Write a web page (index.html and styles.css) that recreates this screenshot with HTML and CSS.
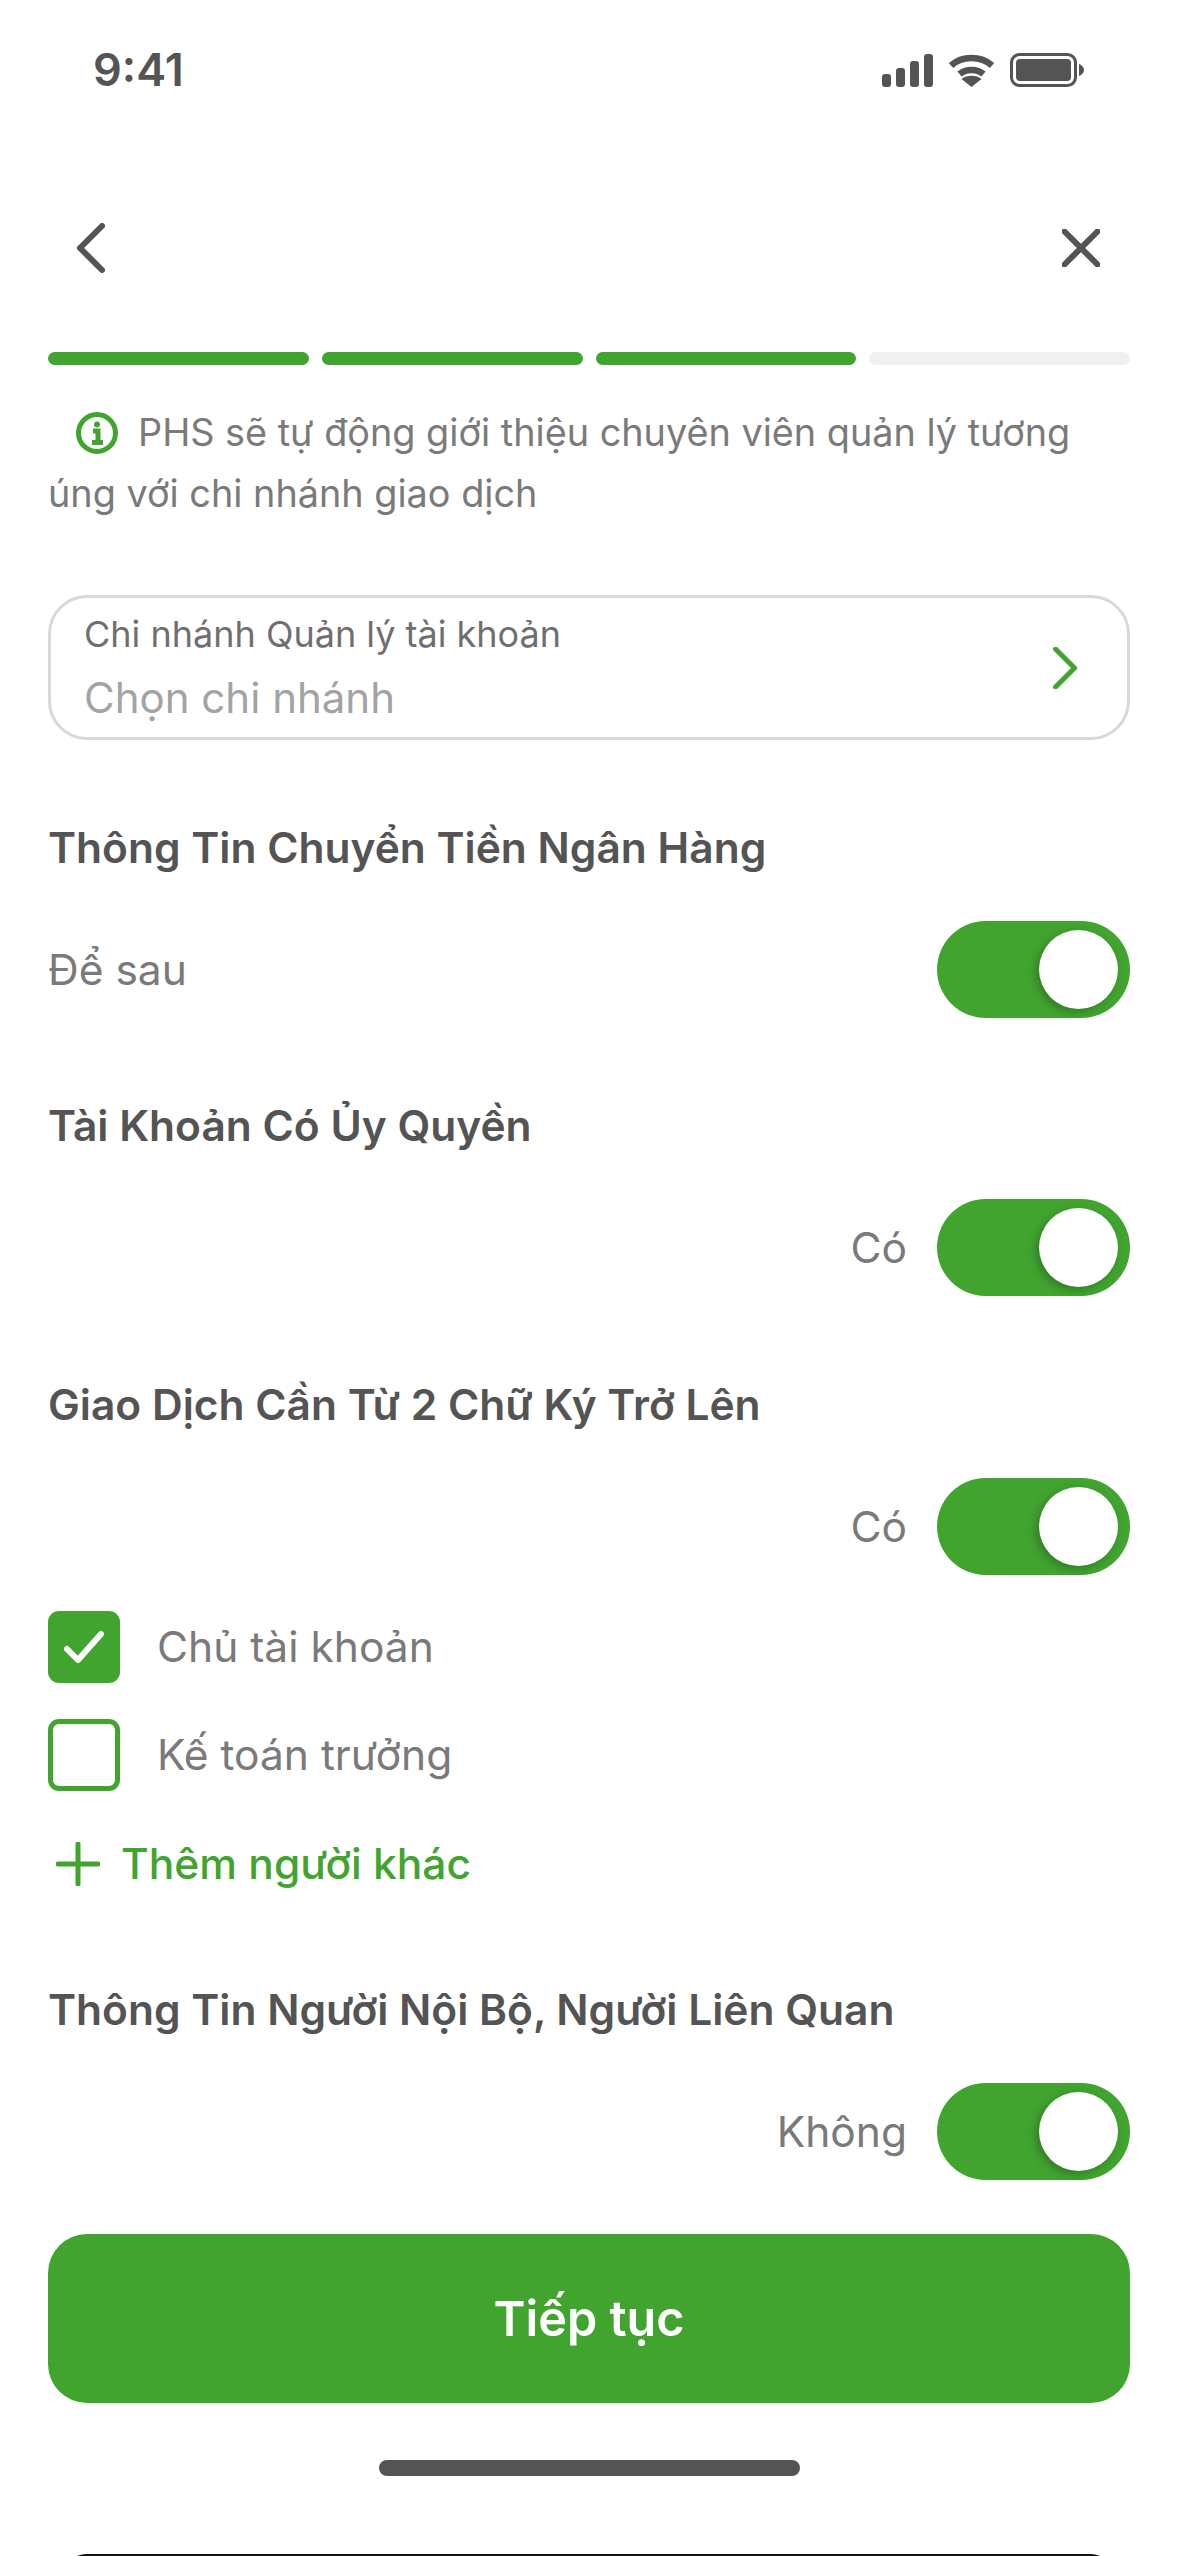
FILE: index.html
```html
<!DOCTYPE html>
<html lang="en">
<head>
    <meta charset="UTF-8">
    <meta name="viewport" content="width=device-width, initial-scale=1.0">
    <title>Mở tài khoản</title>
    <link rel="stylesheet" href="styles.css">
</head>
<body>

<div class="screen">
    <div class="status-bar">
        <span class="time">9:41</span>
        <div class="status-icons">
            <svg width="51" height="33" viewBox="0 0 51 33"><rect x="0" y="20" width="9" height="13" rx="3"/><rect x="14" y="14" width="9" height="19" rx="3"/><rect x="28" y="7" width="9" height="26" rx="3"/><rect x="42" y="0" width="9" height="33" rx="3"/></svg>
            <svg width="47" height="34" viewBox="0 0 47 34"><path class="wifi-arc" d="M3 12.5C14 2.5 33 2.5 44 12.5"/><path class="wifi-arc" d="M11.5 21C18 15.5 29 15.5 35.500 21"/><path d="M23.500 34L13.500 26C19 21.800 28 21.800 33.500 26Z"/></svg>
            <svg width="74" height="34" viewBox="0 0 74 34"><rect class="battery-shell" x="1.500" y="1.500" width="64" height="31" rx="8"/><rect x="6" y="6" width="55" height="22" rx="4"/><path d="M69 11C72 12 74 14.500 74 17C74 19.500 72 22 69 23Z"/></svg>
        </div>
    </div>

    <div class="nav-bar">
        <svg width="28" height="50" viewBox="0 0 28 50"><path class="nav-stroke" d="M25 3L3 25L25 47"/></svg>
        <svg width="38" height="38" viewBox="0 0 38 38"><path class="nav-stroke" d="M2.500 2.500L35.500 35.500M35.500 2.500L2.500 35.500"/></svg>
    </div>

    <div class="progress">
        <div class="step done"></div>
        <div class="step done"></div>
        <div class="step done"></div>
        <div class="step"></div>
    </div>

    <p class="info">
        <svg class="info-icon" width="42" height="42" viewBox="0 0 42 42"><circle class="info-ring" cx="21" cy="21" r="18.500"/><circle class="info-dot" cx="21" cy="12.500" r="3"/><path class="info-stem" d="M17 19H22V30M16 30.500H27"/></svg>PHS sẽ tự động giới thiệu chuyên viên quản lý tương úng với chi nhánh giao dịch
    </p>

    <div class="select-field">
        <div>
            <div class="field-label">Chi nhánh Quản lý tài khoản</div>
            <div class="field-value">Chọn chi nhánh</div>
        </div>
        <svg width="24" height="42" viewBox="0 0 24 42"><path class="chevron" d="M2.500 2L21.500 21L2.500 40"/></svg>
    </div>

    <h2 class="section-title first">Thông Tin Chuyển Tiền Ngân Hàng</h2>
    <div class="toggle-row spread">
        <span class="toggle-text">Để sau</span>
        <div class="toggle"><div class="knob"></div></div>
    </div>

    <h2 class="section-title">Tài Khoản Có Ủy Quyền</h2>
    <div class="toggle-row">
        <span class="toggle-text">Có</span>
        <div class="toggle"><div class="knob"></div></div>
    </div>

    <h2 class="section-title">Giao Dịch Cần Từ 2 Chữ Ký Trở Lên</h2>
    <div class="toggle-row">
        <span class="toggle-text">Có</span>
        <div class="toggle"><div class="knob"></div></div>
    </div>

    <div class="check-list">
        <div class="check-item">
            <div class="checkbox checked">
                <svg width="44" height="36" viewBox="0 0 44 36"><path d="M5 20L16 31L39 5"/></svg>
            </div>
            <span>Chủ tài khoản</span>
        </div>
        <div class="check-item">
            <div class="checkbox"></div>
            <span>Kế toán trưởng</span>
        </div>
    </div>

    <div class="add-row">
        <svg width="44" height="44" viewBox="0 0 44 44"><path d="M22 2V42M2 22H42"/></svg>
        <span>Thêm người khác</span>
    </div>

    <h2 class="section-title last">Thông Tin Người Nội Bộ, Người Liên Quan</h2>
    <div class="toggle-row">
        <span class="toggle-text">Không</span>
        <div class="toggle"><div class="knob"></div></div>
    </div>

    <button class="submit">Tiếp tục</button>

    <div class="home-indicator"></div>
    <div class="next-edge"></div>
</div>

</body>
</html>
```

FILE: styles.css
```css
* {
    box-sizing: border-box;
}

body {
    margin: 0;
    background-color: #fff;
    font-family: Inter, "Noto Sans", sans-serif;
    color: #545454;
}

.screen {
    position: relative;
    width: 1179px;
    height: 2556px;
    padding: 0 49px 0 48px;
    overflow: hidden;
}

.status-bar {
    display: flex;
    justify-content: space-between;
    align-items: center;
    height: 140px;
    padding: 0 46px 0 45px;
}

.time {
    font-size: 45px;
    font-weight: 600;
    line-height: 54px;
}

.status-icons {
    display: flex;
    align-items: center;
    gap: 15px;
}

.status-icons svg {
    fill: #545454;
}

.wifi-arc {
    fill: none;
    stroke: #545454;
    stroke-width: 6.500;
}

.battery-shell {
    fill: none;
    stroke: #545454;
    stroke-width: 3;
}

.nav-bar {
    display: flex;
    justify-content: space-between;
    align-items: center;
    height: 100px;
    margin-top: 58px;
    padding: 0 30px 0 29px;
}

.nav-stroke {
    fill: none;
    stroke: #545454;
    stroke-width: 6;
    stroke-linecap: round;
    stroke-linejoin: round;
}

.progress {
    display: flex;
    gap: 13px;
    margin-top: 54px;
}

.step {
    flex: 1;
    height: 13px;
    border-radius: 7px;
    background-color: #f0f0f0;
}

.step.done {
    background-color: #41a42f;
}

.info {
    margin: 37px 0 0;
    font-size: 37.800px;
    line-height: 61px;
    color: #7a7a7a;
    text-indent: 28px;
}

.info-icon {
    margin-right: 20px;
    vertical-align: -8px;
}

.info-ring {
    fill: none;
    stroke: #41a42f;
    stroke-width: 5;
}

.info-dot {
    fill: #41a42f;
}

.info-stem {
    fill: none;
    stroke: #41a42f;
    stroke-width: 5;
}

.select-field {
    display: flex;
    justify-content: space-between;
    align-items: center;
    height: 145px;
    margin-top: 71px;
    padding: 0 50px 0 33px;
    border: 3px solid #d8d8d8;
    border-radius: 39px;
}

.field-label {
    font-size: 36px;
    line-height: 40px;
    color: #6f6f6f;
}

.field-value {
    margin-top: 20px;
    font-size: 42px;
    line-height: 48px;
    color: #a3a3a3;
}

.chevron {
    fill: none;
    stroke: #41a42f;
    stroke-width: 5;
    stroke-linecap: round;
    stroke-linejoin: round;
}

.section-title {
    margin: 83.400px 0 48px;
    font-size: 42.500px;
    font-weight: 600;
    line-height: 50px;
    color: #545454;
}

.section-title.first {
    margin-top: 83px;
}

.section-title.last {
    margin-top: 96px;
}

.toggle-row {
    display: flex;
    justify-content: flex-end;
    align-items: center;
    gap: 30px;
}

.toggle-row.spread {
    justify-content: space-between;
}

.toggle-text {
    font-size: 42.500px;
    color: #7a7a7a;
}

.toggle {
    display: flex;
    justify-content: flex-end;
    align-items: center;
    width: 193px;
    height: 97px;
    padding-right: 12px;
    border-radius: 49px;
    background-color: #41a42f;
}

.knob {
    width: 79px;
    height: 79px;
    border-radius: 50%;
    background-color: #fff;
    box-shadow: -3px 3px 9px rgba(0, 0, 0, 0.25);
}

.check-list {
    display: flex;
    flex-direction: column;
    gap: 36px;
    margin-top: 36px;
}

.check-item {
    display: flex;
    align-items: center;
    gap: 37px;
    font-size: 42.500px;
    color: #7a7a7a;
}

.checkbox {
    display: flex;
    justify-content: center;
    align-items: center;
    width: 72px;
    height: 72px;
    border: 5px solid #41a42f;
    border-radius: 11px;
}

.checkbox.checked {
    background-color: #41a42f;
}

.checkbox svg {
    fill: none;
    stroke: #fff;
    stroke-width: 6;
    stroke-linecap: round;
    stroke-linejoin: round;
}

.add-row {
    display: flex;
    align-items: center;
    gap: 21px;
    height: 50px;
    margin-top: 48px;
    padding-left: 8px;
    font-size: 42.500px;
    font-weight: 500;
    color: #41a42f;
}

.add-row svg {
    fill: none;
    stroke: #41a42f;
    stroke-width: 5;
    stroke-linecap: round;
}

.submit {
    display: block;
    width: 100%;
    height: 169px;
    margin-top: 54px;
    border: none;
    border-radius: 39px;
    background-color: #41a42f;
    color: #fff;
    font-family: inherit;
    font-size: 48.500px;
    font-weight: 600;
}

.home-indicator {
    width: 421px;
    height: 16px;
    margin: 57px auto 0;
    border-radius: 8px;
    background-color: #545454;
}

/* sliver of the next screen peeking in at the very bottom */
.next-edge {
    position: absolute;
    left: 66px;
    right: 68px;
    bottom: -40px;
    height: 42px;
    border-radius: 20px;
    background-color: #111;
}
```
